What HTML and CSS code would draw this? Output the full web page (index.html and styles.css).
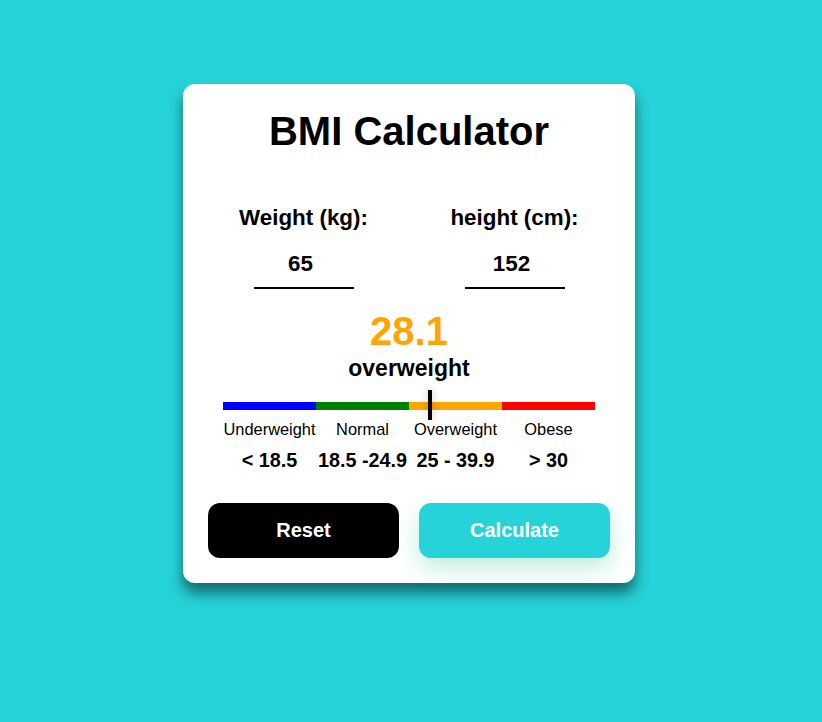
FILE: index.html
```html
<!DOCTYPE html>
<html lang="en">
<head>
<meta charset="utf-8">
<title>BMI Calculator</title>
<link rel="stylesheet" href="styles.css">
</head>
<body>
<div class="page">
  <div class="card">
    <h1 class="title">BMI Calculator</h1>
    <div class="inputs">
      <div class="field">
        <label class="field-label" for="weight">Weight (kg):</label>
        <input class="field-input" id="weight" type="text" value="65">
      </div>
      <div class="field">
        <label class="field-label" for="height">height (cm):</label>
        <input class="field-input" id="height" type="text" value="152">
      </div>
    </div>
    <div class="result">
      <div class="result-value">28.1</div>
      <div class="result-text">overweight</div>
    </div>
    <div class="scale">
      <div class="bar">
        <div class="seg seg-blue"></div>
        <div class="seg seg-green"></div>
        <div class="seg seg-orange"></div>
        <div class="seg seg-red"></div>
        <div class="marker" style="left: 205px"></div>
      </div>
      <div class="scale-row names">
        <span>Underweight</span>
        <span>Normal</span>
        <span>Overweight</span>
        <span>Obese</span>
      </div>
      <div class="scale-row ranges">
        <span>&lt; 18.5</span>
        <span>18.5 -24.9</span>
        <span>25 - 39.9</span>
        <span>&gt; 30</span>
      </div>
    </div>
    <div class="buttons">
      <button class="btn btn-reset" type="button">Reset</button>
      <button class="btn btn-calc" type="button">Calculate</button>
    </div>
  </div>
</div>
</body>
</html>
```

FILE: styles.css
```css
* {
  box-sizing: border-box;
}

html, body {
  margin: 0;
  padding: 0;
}

body {
  background: #26d3d8;
  font-family: "Liberation Sans", Arial, sans-serif;
  color: #000;
  min-height: 722px;
}

.page {
  display: flex;
  justify-content: center;
  padding: 84px 4px 0 0;
}

.card {
  width: 452px;
  height: 499px;
  background: #fff;
  border-radius: 12px;
  padding: 24px 25px 25px;
  box-shadow: 0 10px 14px rgba(0, 0, 0, 0.5);
  display: flex;
  flex-direction: column;
}

.title {
  margin: 0;
  font-size: 40px;
  line-height: 46px;
  font-weight: bold;
  text-align: center;
}

.inputs {
  margin-top: 51px;
  display: grid;
  grid-template-columns: 1fr 1fr;
  column-gap: 20px;
}

.field {
  display: flex;
  flex-direction: column;
  align-items: center;
}

.field-label {
  font-size: 22.4px;
  line-height: 26px;
  font-weight: bold;
}

.field-input {
  margin-top: 9px;
  width: 100px;
  height: 49px;
  padding: 0 6px 0 0;
  border: none;
  border-bottom: 2px solid #000;
  outline: none;
  background: transparent;
  font-family: "Liberation Sans", Arial, sans-serif;
  font-size: 22.4px;
  font-weight: bold;
  text-align: center;
  color: #000;
}

.result {
  margin-top: 19px;
  display: flex;
  flex-direction: column;
  align-items: center;
}

.result-value {
  font-size: 40px;
  line-height: 46px;
  font-weight: bold;
  color: #ffa500;
}

.result-text {
  margin-top: 1px;
  font-size: 23px;
  line-height: 26px;
  font-weight: bold;
}

.scale {
  margin-top: 21px;
  align-self: center;
  width: 372px;
}

.bar {
  position: relative;
  display: flex;
  height: 8px;
}

.seg {
  flex: 1;
}

.seg-blue { background: #0000ff; }
.seg-green { background: #008000; }
.seg-orange { background: #ffa500; }
.seg-red { background: #ff0000; }

.marker {
  position: absolute;
  top: -12px;
  width: 4px;
  height: 30px;
  background: #000;
  box-shadow: 0 0 8px rgba(0, 0, 0, 0.25);
}

.scale-row {
  display: grid;
  grid-template-columns: repeat(4, 1fr);
  text-align: center;
  white-space: nowrap;
}

.names {
  margin-top: 10px;
  font-size: 16.4px;
  line-height: 18px;
}

.ranges {
  margin-top: 11px;
  font-size: 19.8px;
  line-height: 23px;
  font-weight: bold;
}

.buttons {
  margin-top: auto;
  display: grid;
  grid-template-columns: 1fr 1fr;
  column-gap: 20px;
}

.btn {
  height: 55px;
  border: none;
  border-radius: 12px;
  font-family: "Liberation Sans", Arial, sans-serif;
  font-size: 20px;
  font-weight: bold;
  color: #fff;
  cursor: pointer;
}

.btn-reset {
  background: #000;
}

.btn-calc {
  background: #26d3d8;
  box-shadow: 0 10px 22px rgba(40, 200, 140, 0.3);
}
```
